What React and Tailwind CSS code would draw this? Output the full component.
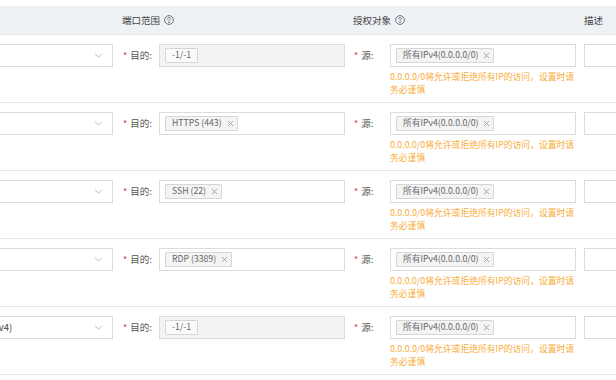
import React from 'react';

const rows = [
  { proto: '', dest: '-1/-1', locked: true },
  { proto: '', dest: 'HTTPS (443)' },
  { proto: '', dest: 'SSH (22)' },
  { proto: '', dest: 'RDP (3389)' },
  { proto: '全部 ICMP(IPv4)', dest: '-1/-1', locked: true },
];

const HelpIcon = () => (
  <svg className="w-[10px] h-[10px] ml-[4px]" viewBox="0 0 10 10" fill="none" stroke="#666" strokeWidth="0.9">
    <circle cx="5" cy="5" r="4.4" />
    <path d="M3.6 3.9a1.4 1.4 0 1 1 2 1.2c-.45.25-.6.55-.6 1.05" strokeLinecap="round" />
    <circle cx="5" cy="7.5" r="0.35" fill="#666" />
  </svg>
);

const Close = () => (
  <svg className="w-[7px] h-[7px]" viewBox="0 0 8 8" stroke="#999" strokeWidth="1">
    <path d="M1 1l6 6M7 1L1 7" />
  </svg>
);

const Tag = ({ label, closable, locked }) => (
  <span className={`inline-flex items-center gap-[5px] h-[15px] pl-[6px] border border-[#d6d6d6] rounded-[1px] text-[8.7px] text-[#666] leading-none whitespace-nowrap ${closable ? 'pr-[3px]' : 'pr-[6px]'} ${locked ? 'bg-[#fafafa]' : 'bg-[#f4f4f4]'}`}>
    {label}
    {closable && <Close />}
  </span>
);

const Label = ({ children }) => (
  <div className="w-[37px] h-[23px] flex items-center pl-[1px] text-[9.5px] text-[#555] shrink-0 whitespace-nowrap">
    <span className="text-[#e4393c] mr-[3px] text-[9px]">*</span>
    {children}
  </div>
);

export default function App() {
  return (
    <div className="w-[616px] h-[380px] overflow-hidden bg-white pt-[6px] font-['Noto_Sans_CJK_SC','Noto_Sans',sans-serif]">
      <div className="ml-[-75px] w-[820px]">
        {/* header */}
        <div className="flex items-center h-[29px] bg-[#eef1f5] border-b border-[#e2e4e8] text-[9.5px] text-[#444]">
          <div className="w-[197px] shrink-0" />
          <div className="w-[231px] shrink-0 flex items-center">端口范围<HelpIcon /></div>
          <div className="w-[231px] shrink-0 flex items-center">授权对象<HelpIcon /></div>
          <div>描述</div>
        </div>

        {rows.map((r, i) => (
          <div key={i} className="flex items-start h-[68px] pt-[9px] border-b border-[#e6e6e6]">
            {/* protocol select */}
            <div className="w-[197px] shrink-0">
              <div className="w-[188px] h-[23px] border border-[#dcdcdc] flex items-center justify-between pl-[17px] pr-[9px] text-[9.5px] text-[#444]">
                <span className="whitespace-nowrap">{r.proto}</span>
                <svg className="w-[9px] h-[5px]" viewBox="0 0 10 6" fill="none" stroke="#aaa" strokeWidth="1">
                  <path d="M1 1l4 4 4-4" />
                </svg>
              </div>
            </div>

            {/* port range */}
            <div className="w-[231px] shrink-0 flex items-start">
              <Label>目的:</Label>
              <div className={`w-[186px] h-[23px] border border-[#dcdcdc] flex items-center pl-[5px] ${r.locked ? 'bg-[#f3f3f3]' : 'bg-white'}`}>
                <Tag label={r.dest} closable={!r.locked} locked={r.locked} />
              </div>
            </div>

            {/* source */}
            <div className="w-[231px] shrink-0 flex items-start">
              <Label>源:</Label>
              <div className="w-[186px]">
                <div className="h-[23px] border border-[#dcdcdc] flex items-center pl-[5px]">
                  <Tag label="所有IPv4(0.0.0.0/0)" closable />
                </div>
                <div className="mt-[3px] text-[8.8px] leading-[13px] text-[#f9ad3a] whitespace-nowrap">
                  <div>0.0.0.0/0将允许或拒绝所有IP的访问，设置时请</div>
                  <div>务必谨慎</div>
                </div>
              </div>
            </div>

            {/* description */}
            <div className="w-[120px] h-[23px] border border-[#dcdcdc]" />
          </div>
        ))}
      </div>
    </div>
  );
}
